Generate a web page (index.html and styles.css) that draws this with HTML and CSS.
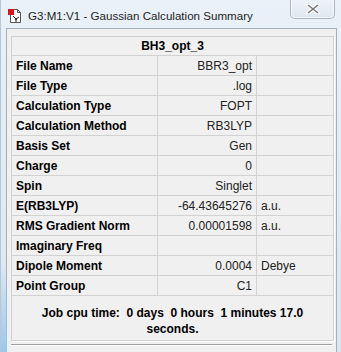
FILE: index.html
```html
<!DOCTYPE html>
<html lang="en">
<head>
  <meta charset="UTF-8" />
  <title>G3:M1:V1 - Gaussian Calculation Summary</title>
  <link rel="stylesheet" href="styles.css">
</head>
<body>

  <div class="window">
    <div class="titlebar">
      <svg class="app-icon" width="16" height="16" viewBox="0 0 16 16">
        <path d="M3.5 1.5h7l3 3v10h-10z" fill="#fff" stroke="#555"/>
        <path d="M10.5 1.5v3h3" fill="none" stroke="#555"/>
        <rect x="1" y="1" width="6" height="6" fill="#d8141c"/>
        <path d="M6 8l3 3M9 11l3-2M9 11v3" stroke="#333" fill="none"/>
        <circle cx="9" cy="11" r="1.2" fill="#333"/>
      </svg>
      <span class="title">G3:M1:V1 - Gaussian Calculation Summary</span>
      <div class="close-btn">
        <svg width="14" height="10" viewBox="0 0 14 10">
          <path d="M2 1l10 8M12 1L2 9" stroke="#fff" stroke-width="3.4" stroke-linecap="square"/>
          <path d="M2 1l10 8M12 1L2 9" stroke="#777" stroke-width="1.6"/>
        </svg>
      </div>
    </div>

    <div class="client">
      <table class="summary">
        <colgroup>
          <col class="c-label">
          <col class="c-value">
          <col class="c-unit">
        </colgroup>
        <tr><th colspan="3" class="head">BH3_opt_3</th></tr>
        <tr><th>File Name</th><td class="val">BBR3_opt</td><td></td></tr>
        <tr><th>File Type</th><td class="val">.log</td><td></td></tr>
        <tr><th>Calculation Type</th><td class="val">FOPT</td><td></td></tr>
        <tr><th>Calculation Method</th><td class="val">RB3LYP</td><td></td></tr>
        <tr><th>Basis Set</th><td class="val">Gen</td><td></td></tr>
        <tr><th>Charge</th><td class="val">0</td><td></td></tr>
        <tr><th>Spin</th><td class="val">Singlet</td><td></td></tr>
        <tr><th>E(RB3LYP)</th><td class="val">-64.43645276</td><td>a.u.</td></tr>
        <tr><th>RMS Gradient Norm</th><td class="val">0.00001598</td><td>a.u.</td></tr>
        <tr><th>Imaginary Freq</th><td class="val"></td><td></td></tr>
        <tr><th>Dipole Moment</th><td class="val">0.0004</td><td>Debye</td></tr>
        <tr><th>Point Group</th><td class="val">C1</td><td></td></tr>
        <tr><th colspan="3" class="foot">Job cpu time:  0 days  0 hours  1 minutes 17.0<br>seconds.</th></tr>
      </table>
      <div class="separator"></div>
    </div>
  </div>

</body>
</html>
```

FILE: styles.css
```css
* { margin: 0; padding: 0; box-sizing: border-box; }

body {
  width: 341px;
  height: 352px;
  overflow: hidden;
  background: #dfe9f3;
  font-family: 'Liberation Sans', Arial, sans-serif;
}

.window {
  height: 352px;
  background: linear-gradient(to bottom, #eaf1f8 0%, #e2ecf5 40%, #dbe6f1 100%);
  border-left: 1px solid #b7c6d6;
  position: relative;
}

/* bluish desktop showing through the frame */
.window:before {
  content: '';
  position: absolute;
  left: 0; bottom: 0;
  width: 6px; height: 90px;
  background: linear-gradient(to bottom, rgba(140,190,230,0) 0%, #9cc8ea 100%);
}

.titlebar {
  height: 28px;
  display: flex;
  align-items: flex-start;
  padding: 8px 0 0 6px;
  position: relative;
}

.app-icon { flex: none; }

.title {
  margin-left: 5px;
  font-family: 'Liberation Sans', Arial, sans-serif;
  font-size: 11.6px;
  line-height: 16px;
  color: #1e1e1e;
}

.close-btn {
  position: absolute;
  top: -1px; left: 289px;
  width: 45px; height: 20px;
  border: 1px solid #a9b6c4;
  border-top: none;
  border-radius: 0 0 5px 5px;
  background: linear-gradient(to bottom, #eef3f8, #dfe8f1);
  box-shadow: inset 0 0 0 1px rgba(255,255,255,0.7);
  display: flex;
  align-items: center;
  justify-content: center;
}

.client {
  margin: 0 4px 0 5px;
  height: 330px;
  background: #f0f0f0;
  border: 1px solid #a5b0bc;
  padding: 7px 4px 0 4px;
}

.summary {
  width: 322px;
  border-collapse: collapse;
  border: 1px solid #8c8c8c;
  box-shadow: 1px 1px 0 #fff;
  font-size: 12px;
  color: #000;
  table-layout: fixed;
}

.c-label { width: 146px; }
.c-value { width: 99px; }
.c-unit { width: 77px; }

.summary th, .summary td {
  border: 1px solid #d2d2d2;
  height: 20px;
  line-height: 16px;
  padding: 0 4px;
  white-space: nowrap;
}

.summary th {
  text-align: left;
  font-weight: bold;
}

.summary td { color: #222; }

.summary .val { text-align: right; }

.summary .head {
  text-align: center;
  height: 19px;
}

.summary .foot {
  text-align: center;
  white-space: pre;
  height: 45px;
  padding-top: 5px;
}

.separator {
  margin-top: 3px;
  border-top: 1px solid #a0a0a0;
  border-bottom: 1px solid #fff;
}
```
